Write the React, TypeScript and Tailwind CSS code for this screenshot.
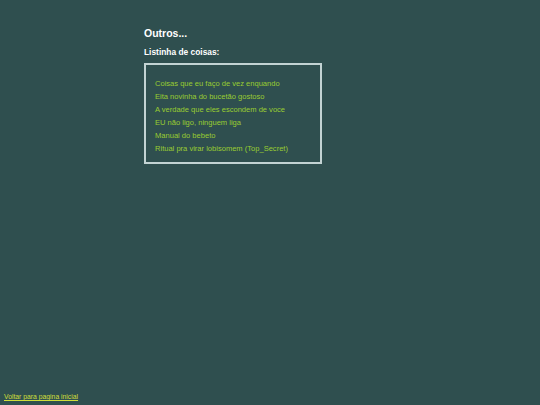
export default function App() {
  const items = [
    "Coisas que eu faço de vez enquando",
    "Eita novinha do bucetão gostoso",
    "A verdade que eles escondem de voce",
    "EU não ligo, ninguem liga",
    "Manual do bebeto",
    "Ritual pra virar lobisomem (Top_Secret)",
  ];

  return (
    <div className="h-[405px] w-[540px] bg-[#2f4f4f] flex flex-col font-['Liberation_Sans',Arial,sans-serif]">
      <div className="flex-1 pl-[144px] pt-[26px]">
        <h1 className="text-[10.5px] font-bold text-white leading-[14px]">Outros...</h1>
        <h2 className="mt-[6px] text-[8.4px] font-bold text-white leading-[12px]">Listinha de coisas:</h2>
        <div className="mt-[5px] w-[178px] h-[101px] border-2 border-[#c3d3d3] pl-[9px] pt-[12px]">
          <ul className="flex flex-col">
            {items.map((item) => (
              <li key={item} className="text-[7.55px] leading-[13px] text-[#9acd32]">
                {item}
              </li>
            ))}
          </ul>
        </div>
      </div>
      <div className="pl-[4px] pb-[3px]">
        <a href="#" className="block text-[6.8px] leading-[10px] text-[#d0df3a] underline">
          Voltar para pagina inicial
        </a>
      </div>
    </div>
  );
}
